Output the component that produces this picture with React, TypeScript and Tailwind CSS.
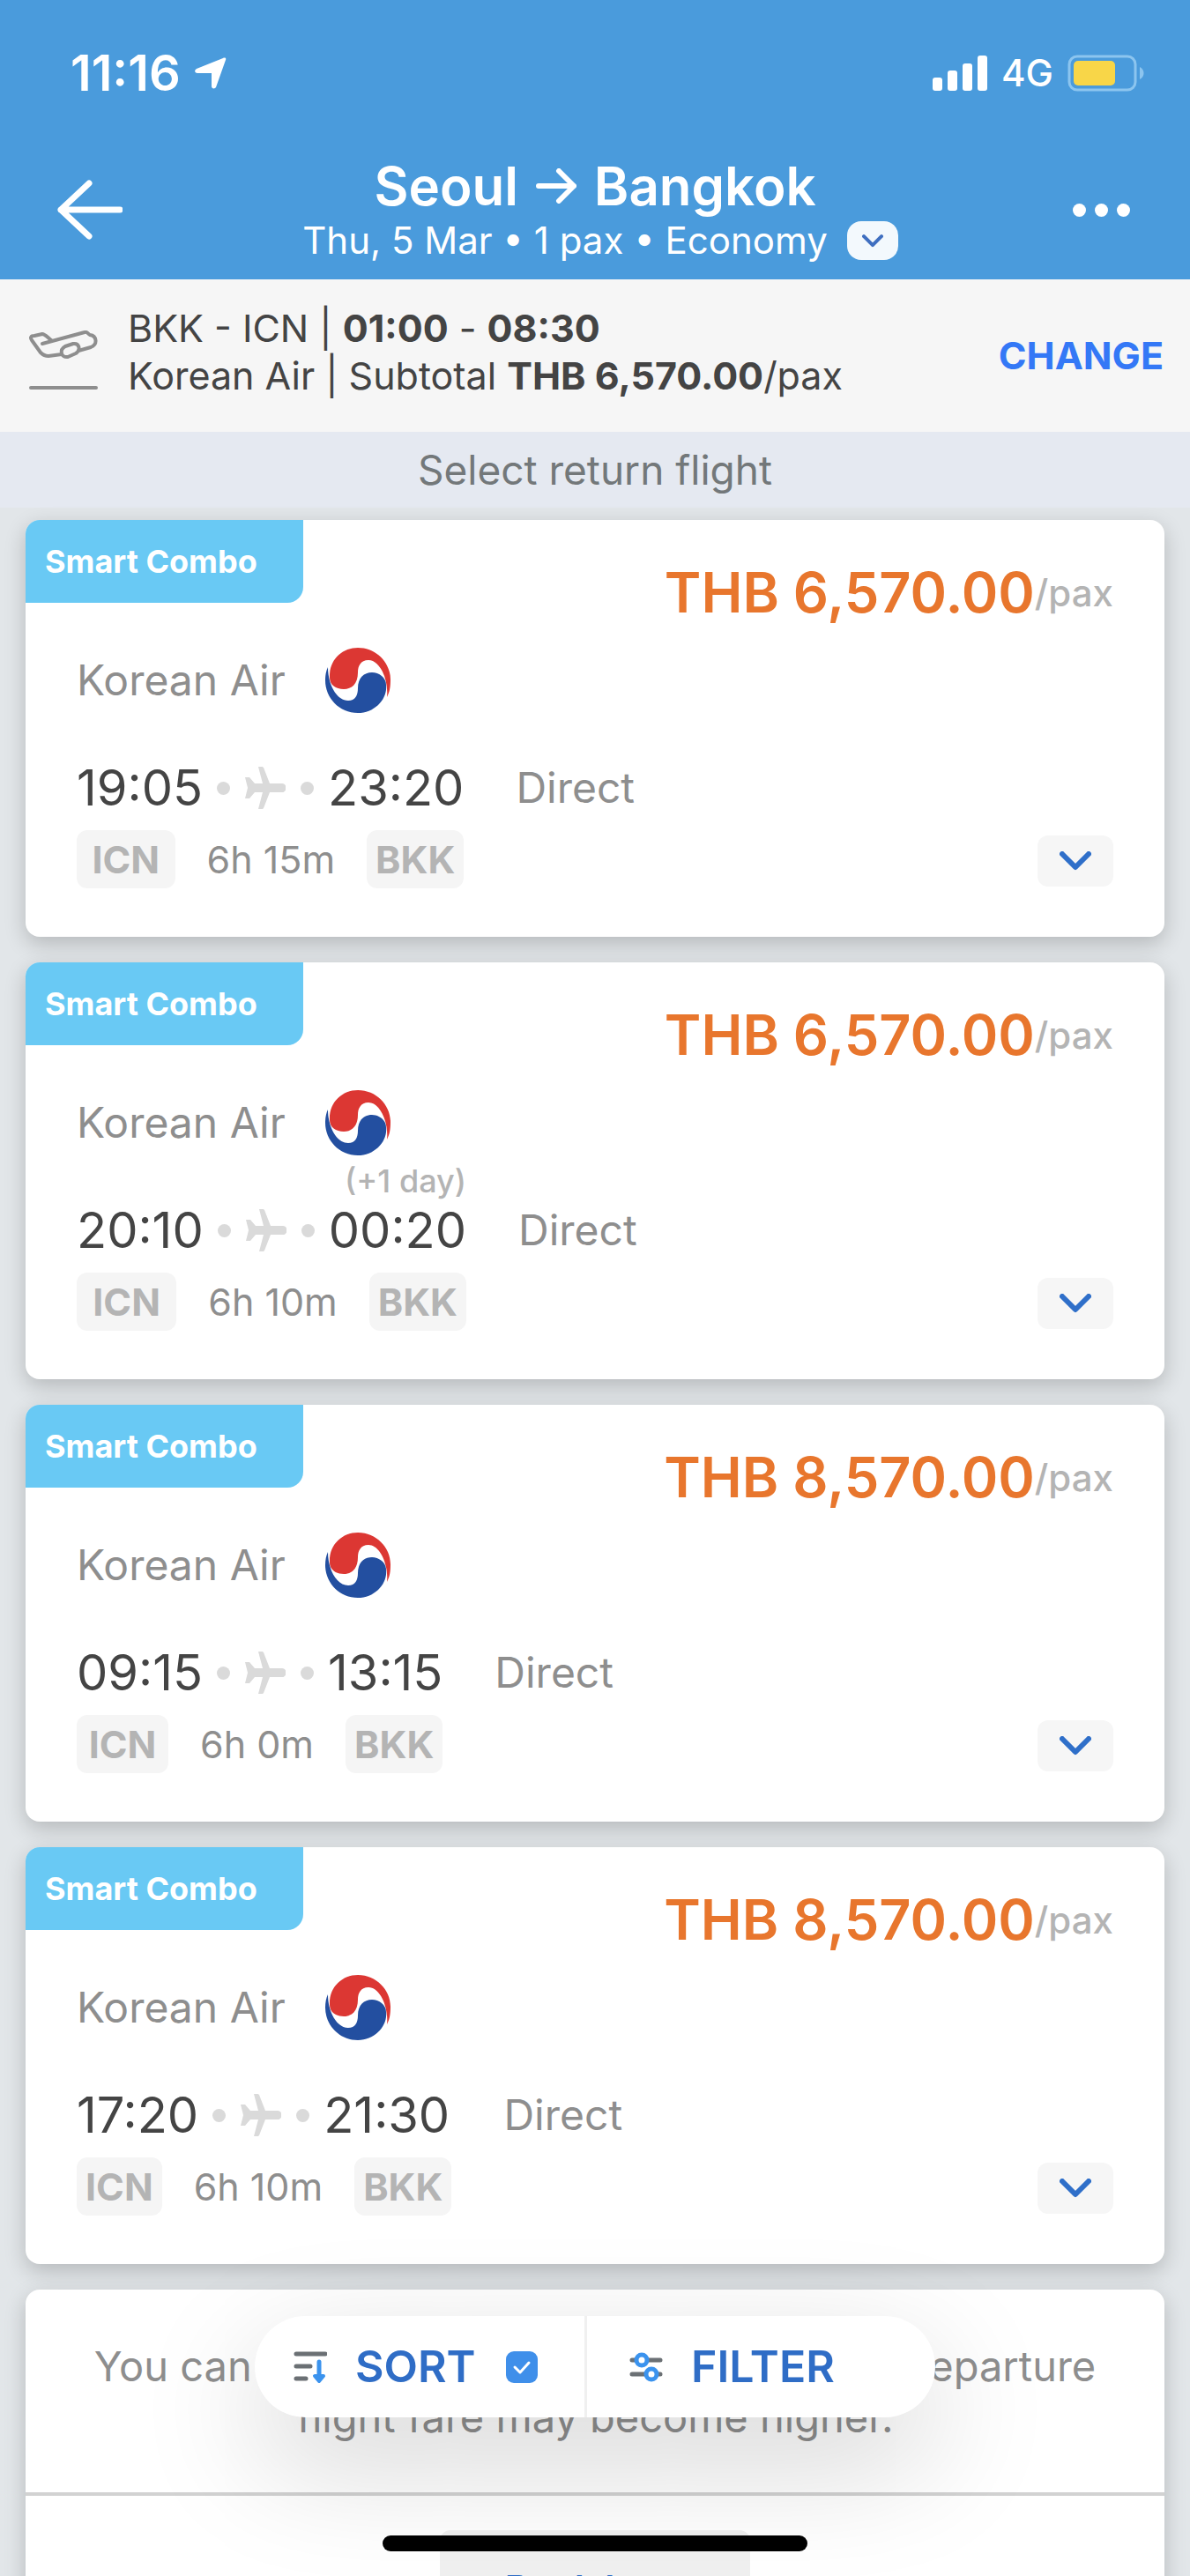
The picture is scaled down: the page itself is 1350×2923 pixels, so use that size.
type Flight = {
  price: string
  depart: string
  arrive: string
  duration: string
  plusDay?: boolean
}

const flights: Flight[] = [
  { price: '6,570.00', depart: '19:05', arrive: '23:20', duration: '6h 15m' },
  { price: '6,570.00', depart: '20:10', arrive: '00:20', duration: '6h 10m', plusDay: true },
  { price: '8,570.00', depart: '09:15', arrive: '13:15', duration: '6h 0m' },
  { price: '8,570.00', depart: '17:20', arrive: '21:30', duration: '6h 10m' },
]

function ChevronDown({ className }: { className: string }) {
  return (
    <svg viewBox="0 0 36 22" fill="none" className={className} aria-hidden>
      <path d="M3 3l15 15L33 3" stroke="currentColor" strokeWidth="6" strokeLinecap="round" strokeLinejoin="round" />
    </svg>
  )
}

function KoreanAirLogo() {
  return (
    <svg viewBox="0 0 74 74" className="size-[74px]" aria-hidden>
      <path d="M5 34C4 14 19 0 37 0C58 0 74 17 74 36C74 45 73 50 70 56C72 36 62 14 49 14C40 14 37 21 37 28C37 41 30 47 21 47C12 47 5 42 5 34Z" fill="#dc3733" />
      <path d="M69 42C71 58 56 74 37 74C16 74 0 57 0 37C0 31 1 26 3 22C3 42 13 60 26 60C34 60 37 54 37 46C37 34 44 28 53 28C61 28 69 34 69 42Z" fill="#234fa0" />
    </svg>
  )
}

function PlaneIcon() {
  return (
    <svg viewBox="0 0 46 48" className="h-12 w-[46px]" fill="#dadada" aria-hidden>
      <path d="M15 0h4c1 0 1 0 2 1l7 18h14c6 0 6 10 0 10H28l-7 18c-1 1-1 1-2 1h-4l5-19h-9l-6 7H0l3-12L0 12h5l6 7h9z" />
    </svg>
  )
}

function StatusBar() {
  return (
    <div className="flex items-center justify-between pt-[50px] pr-[51px] pl-[80px] text-white">
      <div className="flex items-center gap-4">
        <span className="text-[56px] leading-[66px] font-semibold">11:16</span>
        <svg viewBox="0 0 36 36" className="size-9" fill="currentColor" aria-hidden>
          <path d="M35 3L24 34c-1 2-5 2-5-1V18H3c-3 0-4-3-1-5L32 1c2-1 4 0 3 2z" />
        </svg>
      </div>
      <div className="flex items-center gap-4">
        <svg viewBox="0 0 62 40" className="h-10 w-[62px]" fill="currentColor" aria-hidden>
          <rect x="0" y="25" width="11" height="15" rx="3" />
          <rect x="17" y="17" width="11" height="23" rx="3" />
          <rect x="34" y="9" width="11" height="31" rx="3" />
          <rect x="51" y="0" width="11" height="40" rx="3" />
        </svg>
        <span className="text-[42px] leading-[66px] font-medium">4G</span>
        <svg viewBox="0 0 88 42" className="h-[42px] w-[88px]" aria-hidden>
          <rect x="2" y="2" width="75" height="38" rx="9" fill="none" stroke="#8cc5ef" strokeWidth="3" />
          <rect x="7" y="7" width="47" height="28" rx="5" fill="#f8d648" />
          <path d="M82 14c6 3 6 11 0 14z" fill="#8cc5ef" />
        </svg>
      </div>
    </div>
  )
}

function NavBar() {
  return (
    <div className="grid grid-cols-[200px_1fr_200px] items-center text-white">
      <button type="button" aria-label="Back" className="ml-[65px] w-[74px]">
        <svg viewBox="0 0 74 68" fill="none" className="h-[68px] w-[74px]" aria-hidden>
          <path d="M71 34H4M36 4L4 34l32 30" stroke="currentColor" strokeWidth="7" strokeLinecap="round" strokeLinejoin="round" />
        </svg>
      </button>
      <div className="flex flex-col items-center">
        <h1 className="flex items-center gap-5 text-[60px] leading-[70px] font-semibold">
          Seoul
          <svg viewBox="0 0 46 40" fill="none" className="h-10 w-[46px]" role="img" aria-label="to">
            <path d="M3 20h40M26 3l17 17-17 17" stroke="currentColor" strokeWidth="6" strokeLinecap="round" strokeLinejoin="round" />
          </svg>
          Bangkok
        </h1>
        <div className="flex items-center gap-[22px] pl-3 text-[42px] leading-[54px]">
          <span>Thu, 5 Mar • 1 pax • Economy</span>
          <button type="button" aria-label="Edit search" className="flex h-11 w-[58px] items-center justify-center rounded-2xl bg-[#f3f9fd] text-[#3f6fc0]">
            <ChevronDown className="h-[15px] w-6" />
          </button>
        </div>
      </div>
      <button type="button" aria-label="More options" className="mr-[68px] flex items-center gap-2.5 justify-self-end">
        {[0, 1, 2].map((i) => (
          <span key={i} className="size-[15px] rounded-full bg-white" />
        ))}
      </button>
    </div>
  )
}

function SelectedFlight() {
  return (
    <section className="flex shrink-0 items-center bg-[#f6f6f6] pt-7 pr-[30px] pb-[37px] pl-[33px] text-[43px] leading-[54px] text-[#444]">
      <svg viewBox="0 0 78 68" fill="none" className="mt-5 mr-[34px] h-[68px] w-[78px]" stroke="#8e8e8e" strokeWidth="4" strokeLinecap="round" strokeLinejoin="round" aria-hidden>
        <path d="M15 15L63 2c3-1 4 2 6 3c8 1 9 11 1 14L56 23M26 12c-6-5-8-8-11-8L6 6C2 6 1 8 3 11l10 14c3 3 5 4 9 4l15-2" />
        <path d="M41 18l9-3c7-1 9 7 3 11l-9 4c-8 1-10-8-3-12z" />
        <path d="M2 65h74" />
      </svg>
      <div className="grow">
        <p>
          BKK - ICN | <b>01:00</b> - <b>08:30</b>
        </p>
        <p>
          Korean Air | Subtotal <b>THB 6,570.00</b>/pax
        </p>
      </div>
      <button type="button" className="mt-2 font-bold text-[#3478f6]">
        CHANGE
      </button>
    </section>
  )
}

function FlightCard({ flight }: { flight: Flight }) {
  return (
    <article className="overflow-hidden rounded-2xl bg-white shadow-[0_8px_24px_rgba(0,0,0,0.2)]">
      <div className="flex items-start justify-between pr-[58px]">
        <span className="flex h-[94px] w-[315px] items-center rounded-br-[18px] bg-[#69c9f4] pl-[22px] text-[36px] font-bold text-white">
          Smart Combo
        </span>
        <p className="mt-[42px] flex h-20 items-center text-[63px] font-semibold text-[#e8762d]">
          THB {flight.price}
          <span className="text-[42px] font-medium text-[#b4b4b4]">/pax</span>
        </p>
      </div>

      <div className="mt-[23px] flex h-[74px] items-center gap-[45px] pl-[58px] text-[48px] text-[#8e8e8e]">
        Korean Air
        <KoreanAirLogo />
      </div>

      <div className="mt-11 flex items-end justify-between px-[58px] pb-[55px]">
        <div className="flex items-start gap-[59px]">
          <div>
            <div className="flex h-[82px] items-center text-[56px] text-[#444]">
              {flight.depart}
              <span className="mx-4 flex items-center gap-[17px]">
                <i className="size-[15px] rounded-full bg-[#dadada]" />
                <PlaneIcon />
                <i className="size-[15px] rounded-full bg-[#dadada]" />
              </span>
              <span className="relative">
                {flight.arrive}
                {flight.plusDay && (
                  <small className="absolute right-0 bottom-full text-[36px] leading-7 font-medium whitespace-nowrap text-[#b4b4b4]">
                    (+1 day)
                  </small>
                )}
              </span>
            </div>
            <div className="mt-[7px] flex h-[66px] items-stretch gap-9 text-[43px] leading-[66px] text-[#8e8e8e]">
              <span className="grow rounded-xl bg-[#f5f5f5] px-2.5 text-center font-bold text-[#b4b4b4]">ICN</span>
              {flight.duration}
              <span className="rounded-xl bg-[#f5f5f5] px-2.5 font-bold text-[#b4b4b4]">BKK</span>
            </div>
          </div>
          <span className="flex h-[82px] items-center text-[48px] text-[#8e8e8e]">Direct</span>
        </div>
        <button type="button" aria-label="Show details" className="mb-0.5 flex h-[58px] w-[86px] items-center justify-center rounded-xl bg-[#f6f6f6] text-[#2f6fc9]">
          <ChevronDown className="h-[22px] w-9" />
        </button>
      </div>
    </article>
  )
}

function SortFilterBar() {
  return (
    <div className="flex h-[115px] w-[772px] rounded-full bg-white text-[50px] font-semibold text-[#2f6dc6] shadow-[0_48px_140px_rgba(0,0,0,0.18)]">
      <button type="button" className="flex w-[377px] items-center border-r-[3px] border-[#f0f0f0] pl-11">
        <svg viewBox="0 0 38 38" fill="none" className="size-[38px]" strokeWidth="5" strokeLinecap="round" strokeLinejoin="round" aria-hidden>
          <path d="M3 4h33M3 18h16M3 32h11" stroke="#6b7074" />
          <path d="M29 13v19" stroke="#3b93ee" />
          <path d="M24 29h10l-5 6z" fill="#3b93ee" stroke="#3b93ee" strokeWidth="4" />
        </svg>
        <span className="mr-[34px] ml-8">SORT</span>
        <svg viewBox="0 0 36 36" fill="none" className="size-9" aria-hidden>
          <rect width="36" height="36" rx="9" fill="#3f8fea" />
          <path d="M10 18l6 6 10-11" stroke="#fff" strokeWidth="3" strokeLinecap="round" strokeLinejoin="round" />
        </svg>
      </button>
      <button type="button" className="flex grow items-center pl-12">
        <svg viewBox="0 0 38 34" fill="none" className="mr-8 h-[34px] w-[38px]" strokeWidth="5" strokeLinecap="round" aria-hidden>
          <path d="M3 9h32M3 25h32" stroke="#6b7074" />
          <circle cx="14" cy="9" r="6" fill="#fff" stroke="#3b93ee" />
          <circle cx="25" cy="25" r="6" fill="#fff" stroke="#3b93ee" />
        </svg>
        FILTER
      </button>
    </div>
  )
}

export default function App() {
  return (
    <div className="relative flex h-screen flex-col overflow-hidden bg-[#e2e6e9] font-['Inter','Liberation_Sans',sans-serif]">
      <header className="shrink-0 bg-[#4a9bdc] pb-[17px]">
        <StatusBar />
        <div className="h-[60px]" />
        <NavBar />
      </header>
      <SelectedFlight />

      <main className="min-h-0 grow overflow-y-auto [scrollbar-width:none]">
        <h2 className="bg-[#e5e9f1] text-center text-[46px] leading-[86px] text-[#73787a]">Select return flight</h2>
        <div className="flex flex-col gap-[29px] px-[29px] pt-3.5">
          {flights.map((flight) => (
            <FlightCard key={flight.depart} flight={flight} />
          ))}

          <section className="rounded-2xl bg-white text-center shadow-[0_8px_24px_rgba(0,0,0,0.2)]">
            <p className="border-b-4 border-[#d2d2d2] pt-[58px] pb-14 text-[47px] leading-[58px] text-[#8e8e8e]">
              You can book a return flight later, but the departure
              <br />
              flight fare may become higher.
            </p>
            <div className="py-[39px]">
              <button type="button" className="h-[132px] w-[352px] rounded-xl bg-[#f0f0f0] text-[42px] font-semibold text-[#2f6dc6]">
                Book later
              </button>
            </div>
          </section>
        </div>
      </main>

      {/* Floating controls and home indicator */}
      <div className="absolute inset-x-0 bottom-7 flex flex-col items-center gap-[134px]">
        <SortFilterBar />
        <div className="h-[18px] w-[482px] rounded-full bg-black" />
      </div>
    </div>
  )
}
